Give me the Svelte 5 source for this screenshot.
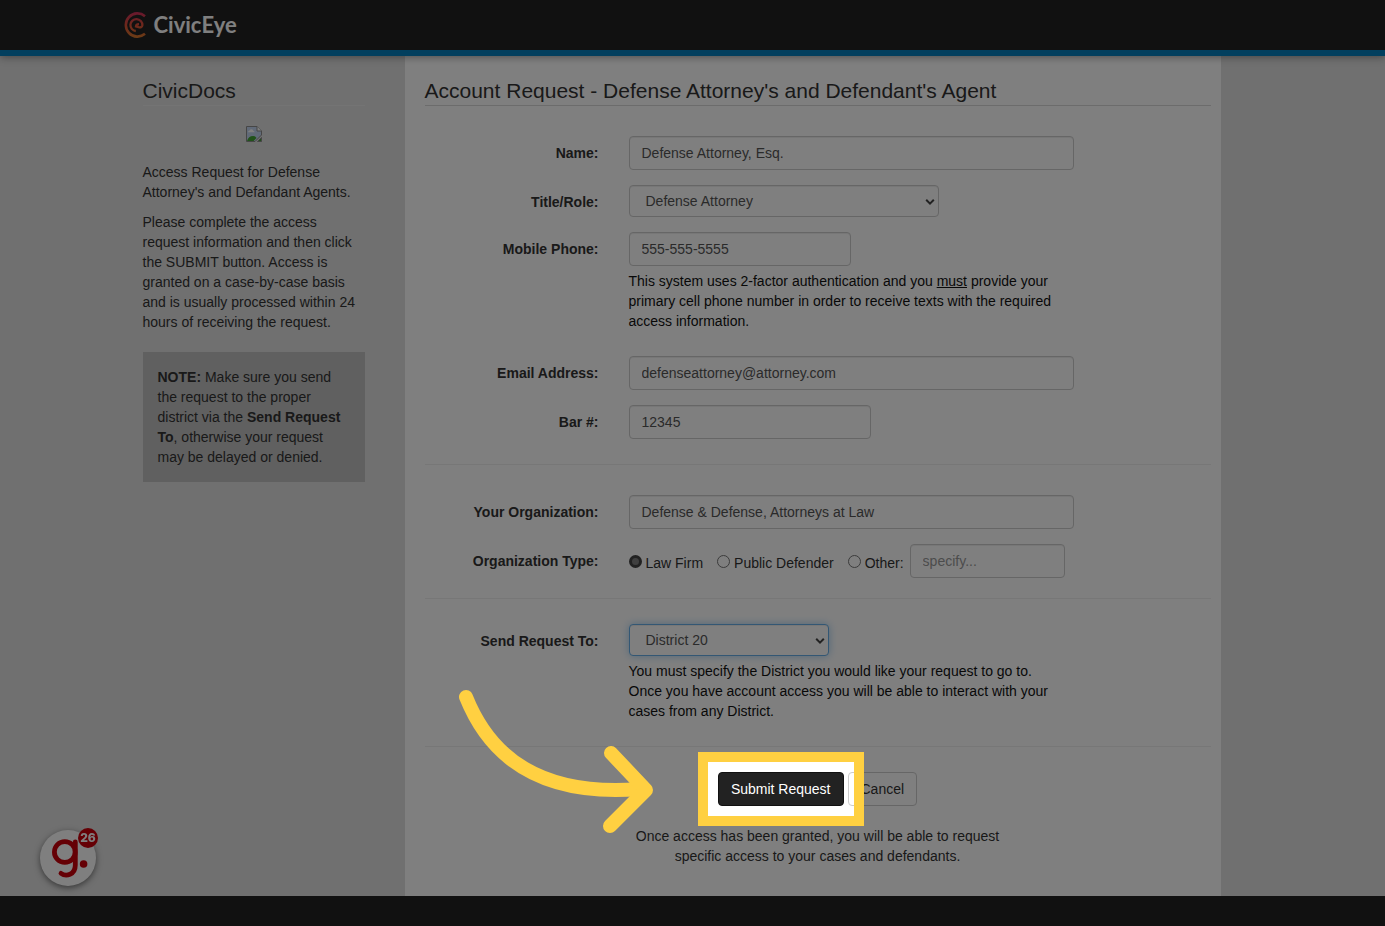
<script>
  let name = $state('Defense Attorney, Esq.');
  let role = $state('Defense Attorney');
  let phone = $state('555-555-5555');
  let email = $state('defenseattorney@attorney.com');
  let bar = $state('12345');
  let organization = $state('Defense & Defense, Attorneys at Law');
  let orgType = $state('firm');
  let other = $state('');
  let district = $state('District 20');
</script>

{#snippet chevron()}
  <svg class="chevron" width="10" height="8" viewBox="0 0 10 8" aria-hidden="true">
    <path d="M1.2 1.8 5 5.6 8.8 1.8" fill="none" stroke="#444" stroke-width="2" />
  </svg>
{/snippet}

<div class="shell">
  <header>
    <div class="container">
      <a class="brand" href="#home">
        <svg width="25" height="28" viewBox="0 0 25 28" aria-hidden="true">
          <defs>
            <linearGradient id="flame" x1="0" y1="1" x2="0" y2="27" gradientUnits="userSpaceOnUse">
              <stop offset="0" stop-color="#d0305c" />
              <stop offset="0.5" stop-color="#dc5038" />
              <stop offset="1" stop-color="#d87a2c" />
            </linearGradient>
          </defs>
          <g fill="none" stroke="url(#flame)">
            <path d="M22 5.2A11.6 11.6 0 1 0 22 22.8" stroke-width="2.6" />
            <path d="M12.8 20A6 6 0 1 1 19.4 14.2C19.2 16.4 17.4 16.6 15.6 16.2L13 15.4Q13.2 13.2 16 13.2" stroke-width="2.3" />
          </g>
        </svg>
        <span>CivicEye</span>
      </a>
    </div>
  </header>

  <div class="container columns">
    <aside>
      <h2>CivicDocs</h2>
      <svg class="missing" width="16" height="16" viewBox="0 0 16 16" role="img" aria-label="Missing image">
        <path d="M.5.5H11L15.5 5V9L9 15.5H.5Z" fill="#c3d4f0" stroke="#8c8c8c" />
        <path d="M11 .5V5h4.5" fill="#fff" stroke="#8c8c8c" />
        <path d="M2 6.2Q2 4.6 3.6 4.6 4.2 3 5.6 3.2 7.2 3.3 7.3 4.8 8.6 4.9 8.6 6.2Z" fill="#fff" />
        <path d="M1 15Q2.5 10 7 10 9.4 10 10.5 12L7.6 15Z" fill="#42a534" />
        <path d="M11.5 15.5 15.5 11.5V15.5Z" fill="#42a534" stroke="#8c8c8c" />
      </svg>
      <p>Access Request for Defense Attorney's and Defandant Agents.</p>
      <p>
        Please complete the access request information and then click the SUBMIT button. Access is
        granted on a case-by-case basis and is usually processed within 24 hours of receiving the
        request.
      </p>
      <div class="note">
        <strong>NOTE:</strong> Make sure you send the request to the proper district via the
        <strong>Send Request To</strong>, otherwise your request may be delayed or denied.
      </div>
    </aside>

    <main>
      <h1>Account Request - Defense Attorney's and Defendant's Agent</h1>
      <form onsubmit={(e) => e.preventDefault()}>
        <section>
          <div class="row">
            <label for="name">Name:</label>
            <div class="field"><input id="name" type="text" bind:value={name} /></div>
          </div>
          <div class="row">
            <label for="role">Title/Role:</label>
            <div class="field">
              <div class="pick role">
                <select id="role" bind:value={role}><option>Defense Attorney</option><option>Agent</option></select>
                {@render chevron()}
              </div>
            </div>
          </div>
          <div class="row">
            <label for="phone">Mobile Phone:</label>
            <div class="field">
              <input id="phone" class="half" type="tel" bind:value={phone} />
              <p class="help">
                This system uses 2-factor authentication and you <u>must</u> provide your primary cell
                phone number in order to receive texts with the required access information.
              </p>
            </div>
          </div>
          <div class="row after-help">
            <label for="email">Email Address:</label>
            <div class="field"><input id="email" type="email" bind:value={email} /></div>
          </div>
          <div class="row">
            <label for="bar">Bar #:</label>
            <div class="field"><input id="bar" class="bar" type="text" bind:value={bar} /></div>
          </div>
        </section>

        <section class="org">
          <div class="row">
            <label for="organization">Your Organization:</label>
            <div class="field"><input id="organization" type="text" bind:value={organization} /></div>
          </div>
          <div class="row" role="radiogroup" aria-labelledby="type-label">
            <span class="label" id="type-label">Organization Type:</span>
            <div class="field choices">
              <label><input type="radio" value="firm" bind:group={orgType} />Law Firm</label>
              <label><input type="radio" value="defender" bind:group={orgType} />Public Defender</label>
              <label><input type="radio" value="other" bind:group={orgType} />Other:</label>
              <input class="specify" type="text" placeholder="specify..." aria-label="Other organization type" bind:value={other} />
            </div>
          </div>
        </section>

        <section class="send">
          <div class="row">
            <label for="district">Send Request To:</label>
            <div class="field">
              <div class="pick district">
                <select id="district" bind:value={district}><option>District 20</option><option>District 21</option></select>
                {@render chevron()}
              </div>
              <p class="help">
                You must specify the District you would like your request to go to. Once you have
                account access you will be able to interact with your cases from any District.
              </p>
            </div>
          </div>
        </section>

        <section class="finish">
          <div class="buttons">
            <div class="target">
              <button class="submit" type="submit">Submit Request</button>
              <div class="spotlight"></div>
              <svg class="arrow" width="200" height="160" viewBox="0 0 200 160" aria-hidden="true">
                <g fill="none" stroke="#ffd041" stroke-width="14" stroke-linecap="round" stroke-linejoin="round">
                  <path d="M10 15C34 75 84 115 184 107" />
                  <path d="M155 71 190 108 154 144" />
                </g>
              </svg>
            </div>
            <button class="cancel" type="button">Cancel</button>
          </div>
          <p>Once access has been granted, you will be able to request specific access to your cases and defendants.</p>
        </section>
      </form>
    </main>
  </div>
  <footer></footer>

  <button class="guide" type="button" aria-label="Open guides, 26 new">
    <svg width="56" height="56" viewBox="0 0 56 56" aria-hidden="true">
      <g fill="none" stroke="#cb000b" stroke-width="4.8" stroke-linecap="round">
        <circle cx="24.8" cy="22" r="10.4" />
        <path d="M35.3 12V35C35.3 45 26 47 21 43.4" />
      </g>
      <circle cx="43.6" cy="34" r="3.8" fill="#cb000b" />
    </svg>
    <span class="count">26</span>
  </button>
</div>

<style>
  :global(body) { margin: 0; background: #222; }
  .shell, .shell * { box-sizing: border-box; }
  .shell {
    display: flex;
    flex-direction: column;
    min-height: 100vh;
    overflow: hidden;
    background: #e0e0e0;
    color: #333;
    font: 14px/20px 'Liberation Sans', Arial, sans-serif;
  }
  p, h1, h2 { margin: 0; }
  input, select, button { font: inherit; }
  .container { width: 100%; max-width: 1170px; margin: 0 auto; }

  header {
    position: relative;
    height: 56px;
    background: #222;
    border-bottom: 6px solid #057ebc;
    box-shadow: 0 1px 8px rgba(0, 0, 0, 0.4);
  }
  .brand {
    display: flex;
    align-items: center;
    gap: 6px;
    height: 50px;
    margin-left: 15px;
    color: #fff;
    text-decoration: none;
    font: 700 22px/24px Lato, sans-serif;
    width: max-content;
  }

  .columns { display: grid; grid-template-columns: 297px minmax(0, 1fr) 57px; }
  aside { display: flex; flex-direction: column; padding: 20px 40px 0 35px; }
  h1, h2 { font-size: 21px; line-height: 29px; font-weight: 400; }
  h2 { border-bottom: 1px solid #e8e8e8; }
  .missing { align-self: center; margin: 20px 0; }
  aside p { margin-bottom: 10px; }
  .note { margin-top: 10px; padding: 15px; background: #c0c0c0; }

  main { padding: 20px 10px 30px 20px; background: #fff; }
  h1 { border-bottom: 1px solid #d8d8d8; }
  section { display: flex; flex-direction: column; gap: 15px; padding: 30px 0 25px; }
  section + section { border-top: 1px solid #eee; }
  .org { padding-bottom: 20px; }
  .send { padding: 25px 0; }
  .row { display: grid; grid-template-columns: 25% 58.3333%; margin: 0 -15px; }
  .row > label, .label { padding: 7px 15px 0 0; text-align: right; font-weight: 700; color: #333; }
  .field { padding: 0 15px; }
  .after-help { margin-top: 10px; }
  input[type='text'], input[type='tel'], input[type='email'], select {
    display: block;
    width: 100%;
    height: 34px;
    padding: 6px 12px;
    border: 1px solid #ccc;
    border-radius: 4px;
    background: #fff;
    color: #555;
    box-shadow: inset 0 1px 1px rgba(0, 0, 0, 0.075);
  }
  input::placeholder { color: #999; opacity: 1; }
  input.half { width: 50%; }
  input.bar { width: 242px; }
  .pick { position: relative; }
  .role { width: 310px; }
  .district { width: 200px; }
  select { height: 32px; padding: 5px 16px; appearance: none; }
  .chevron { position: absolute; right: 4px; top: 13px; pointer-events: none; }
  .district select {
    border-color: #66afe9;
    box-shadow: inset 0 1px 1px rgba(0, 0, 0, 0.075), 0 0 8px rgba(102, 175, 233, 0.6);
    outline: none;
  }
  .help { max-width: 435px; padding-top: 5px; color: #111; }
  .choices { display: flex; align-items: center; }
  .choices label { display: flex; align-items: center; gap: 4px; margin-right: 14px; padding-top: 4px; white-space: nowrap; }
  .choices label:nth-of-type(3) { margin-right: 6px; }
  input[type='radio'] {
    appearance: none;
    width: 13px;
    height: 13px;
    margin: 0 0 3px;
    border: 1px solid #767676;
    border-radius: 50%;
    background: #fff;
  }
  input[type='radio']:checked { border: 3px solid #444; background: #808080; }
  .choices .specify { flex: 0 1 155px; min-width: 0; }

  .finish { align-items: center; gap: 20px; padding: 25px 0 0; }
  .buttons { display: flex; gap: 4px; }
  button { cursor: pointer; }
  .target { position: relative; }
  .submit, .cancel { height: 34px; padding: 0 12px; border: 1px solid #ccc; border-radius: 4px; background: #fff; color: #333; }
  .submit { border-color: #111; background: #222; color: #fff; }
  .spotlight {
    position: absolute;
    inset: -10px;
    z-index: 10;
    pointer-events: none;
    box-shadow: 0 0 0 10px #ffd041, 0 0 0 4000px rgba(0, 0, 0, 0.5);
  }
  .arrow { position: absolute; right: 188px; top: -90px; z-index: 11; pointer-events: none; }
  .finish p { max-width: 390px; text-align: center; }
  footer { flex: 1; min-height: 30px; background: #222; }

  .guide {
    position: fixed;
    left: 40px;
    bottom: 40px;
    width: 56px;
    height: 56px;
    padding: 0;
    border: 0;
    border-radius: 50%;
    background: #fff;
    box-shadow: 0 2px 6px rgba(0, 0, 0, 0.5);
  }
  .guide svg { display: block; }
  .count {
    position: absolute;
    right: -2px;
    top: -2px;
    width: 20px;
    height: 20px;
    border-radius: 50%;
    background: #cb000b;
    color: #fff;
    font: 800 12px/20px Inter, sans-serif;
  }
</style>
